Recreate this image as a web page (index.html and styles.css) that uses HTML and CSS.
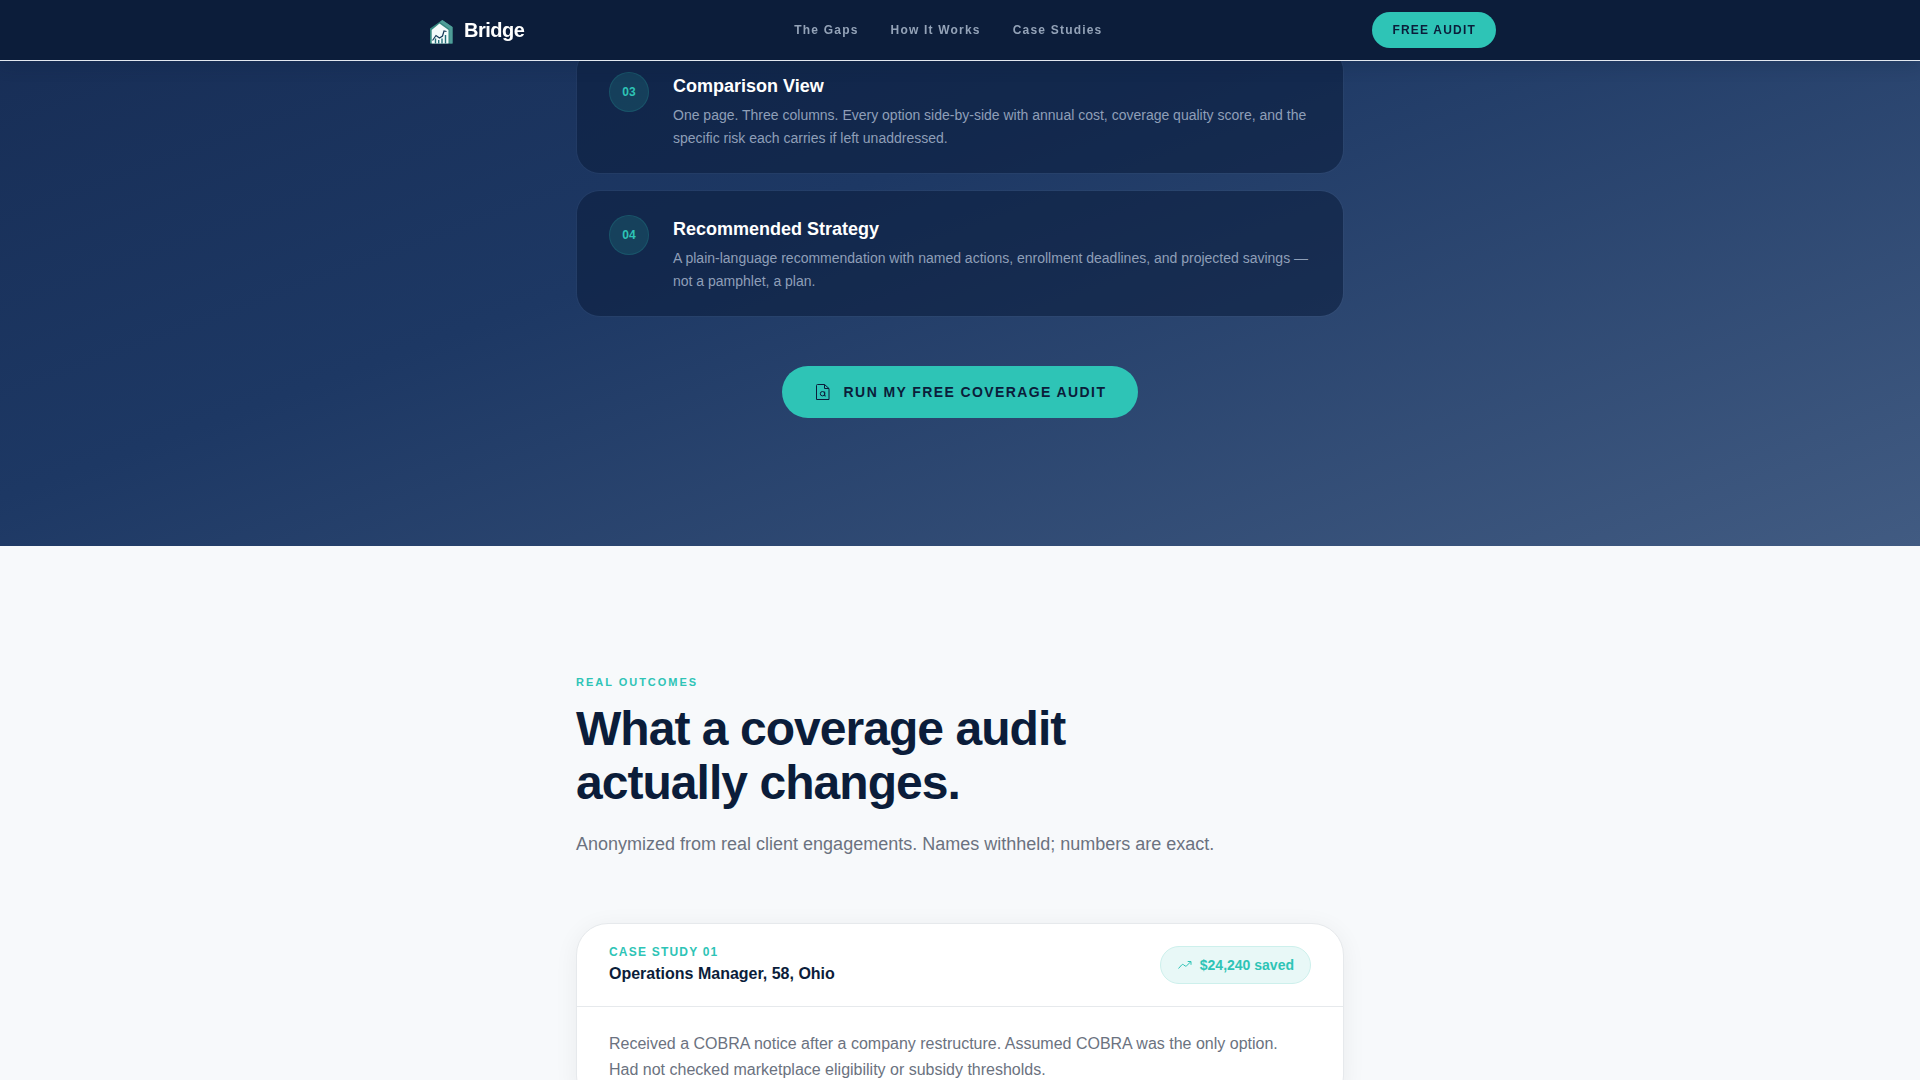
FILE: index.html
```html
<!DOCTYPE html>
<html lang="en">
<head>
  <meta charset="utf-8">
  <meta name="viewport" content="width=device-width, initial-scale=1">
  <title>Bridge</title>
  <link rel="stylesheet" href="styles.css">
</head>
<body>
  <header class="site-header">
    <div class="site-header-inner">
      <a class="brand" href="#">
        <svg class="brand-mark" viewBox="0 0 32 32" aria-hidden="true">
          <path d="M6 14.500 18.300 6l10.200 7v16.500H6z" fill="#35877f"/>
          <path d="M18.300 6l10.200 7v16.500h-3V15L16 8z" fill="#4f9d98"/>
          <path d="M7.700 16 15.500 9.500l9 6.500v13.500H7.700z" fill="#f4fbfb"/>
          <path d="M11.500 29.500v-5M14.700 29.500V26M18 29.500v-5M21.500 29.500V21" stroke="#24707a" stroke-width="1.400" fill="none"/>
          <path d="M8.500 26.500l3.500-5 3.500 2.500 3-2 1.500-5 2.500.5" stroke="#173b58" stroke-width="1.200" fill="none"/>
        </svg>
        <span>Bridge</span>
      </a>
      <nav class="site-nav" aria-label="Main">
        <a href="#gaps">The Gaps</a>
        <a href="#how">How It Works</a>
        <a href="#cases">Case Studies</a>
      </nav>
      <button class="button button-small" type="button">FREE AUDIT</button>
    </div>
  </header>

  <main>
    <section class="steps" id="how">
      <div class="container">
        <ol class="step-list">
          <li class="step">
            <span class="step-number">03</span>
            <div>
              <h3 class="step-title">Comparison View</h3>
              <p class="step-text">One page. Three columns. Every option side-by-side with annual cost, coverage quality score, and the specific risk each carries if left unaddressed.</p>
            </div>
          </li>
          <li class="step">
            <span class="step-number">04</span>
            <div>
              <h3 class="step-title">Recommended Strategy</h3>
              <p class="step-text">A plain-language recommendation with named actions, enrollment deadlines, and projected savings — not a pamphlet, a plan.</p>
            </div>
          </li>
        </ol>
        <div class="steps-action">
          <button class="button button-large" type="button">
            <svg class="button-icon" viewBox="0 0 18 18" aria-hidden="true">
              <path d="M10.500 1.500H3.500a1 1 0 0 0-1 1v14h12.500V5.500zM10.500 1.500v4H15"/>
              <circle cx="8.500" cy="10.700" r="2.200"/>
              <path d="M10.700 8.500v4.500h1"/>
            </svg>
            RUN MY FREE COVERAGE AUDIT
          </button>
        </div>
      </div>
    </section>

    <section class="outcomes" id="cases">
      <div class="container">
        <div class="section-head">
          <p class="eyebrow">REAL OUTCOMES</p>
          <h2 class="section-title">What a coverage audit<br>actually changes.</h2>
          <p class="section-lead">Anonymized from real client engagements. Names withheld; numbers are exact.</p>
        </div>
        <article class="case">
          <div class="case-head">
            <div>
              <p class="case-label">CASE STUDY 01</p>
              <h3 class="case-title">Operations Manager, 58, Ohio</h3>
            </div>
            <span class="saving">
              <svg class="saving-icon" viewBox="0 0 16 16" aria-hidden="true">
                <path d="M1.500 11.500 4.800 7.800Q5.600 7 6.500 7.700L8 8.900Q8.900 9.600 9.700 8.700L14 4.500M10.700 4.500H14V7.800"/>
              </svg>
              $24,240 saved
            </span>
          </div>
          <div class="case-body">
            <p class="case-text">Received a COBRA notice after a company restructure. Assumed COBRA was the only option. Had not checked marketplace eligibility or subsidy thresholds.</p>
          </div>
        </article>
      </div>
    </section>
  </main>
</body>
</html>
```
FILE: styles.css
```css
:root {
  --navy: #0b1d3a;
  --teal: #2ec4b6;
  --line: #e6e9ec;
}

* {
  box-sizing: border-box;
}

body {
  margin: 0;
  background: #f7f9fb;
  color: var(--navy);
  font-family: "Liberation Sans", Arial, sans-serif;
}

h2, h3, p, ol {
  margin: 0;
}

a {
  color: inherit;
  text-decoration: none;
}

.container {
  max-width: 816px;
  margin: 0 auto;
  padding: 0 24px;
}

/* Header */

.site-header {
  position: fixed;
  top: 0;
  left: 0;
  right: 0;
  z-index: 10;
  background: #0c1d3a;
  border-bottom: 1px solid #e2e8f0;
  box-shadow: 0 4px 16px rgba(11, 29, 48, 0.2);
}

.site-header-inner {
  display: flex;
  align-items: center;
  justify-content: space-between;
  max-width: 1120px;
  margin: 0 auto;
  padding: 12px 24px;
}

.brand {
  display: flex;
  align-items: center;
  gap: 8px;
  color: #fff;
  font-size: 20px;
  font-weight: 700;
  letter-spacing: -0.025em;
}

.brand-mark {
  width: 32px;
  height: 32px;
}

.site-nav {
  display: flex;
  gap: 32px;
  color: #94a3b8;
  font-size: 12px;
  font-weight: 700;
  letter-spacing: 0.1em;
}

.button {
  display: inline-flex;
  align-items: center;
  justify-content: center;
  border: 0;
  border-radius: 999px;
  background: var(--teal);
  color: var(--navy);
  font-family: inherit;
  font-weight: 700;
  letter-spacing: 0.1em;
  white-space: nowrap;
}

.button-small {
  padding: 10px 20px;
  font-size: 12px;
  line-height: 16px;
}

.button-large {
  gap: 12px;
  padding: 16px 32px;
  font-size: 14px;
  line-height: 20px;
}

.button-icon {
  width: 18px;
  height: 18px;
  fill: none;
  stroke: currentColor;
  stroke-width: 1;
}

/* Steps */

.steps {
  padding: 47px 0 128px;
  background: linear-gradient(160deg, #172d55 0%, #1d3864 40%, #415b82 100%);
}

.step-list {
  display: grid;
  gap: 16px;
  padding: 0;
  list-style: none;
}

.step {
  display: flex;
  align-items: flex-start;
  gap: 24px;
  padding: 24px 32px 23px;
  border: 1px solid rgba(255, 255, 255, 0.03);
  border-radius: 24px;
  background: rgba(12, 30, 62, 0.6);
  background-clip: padding-box;
}

.step-number {
  display: flex;
  flex: none;
  align-items: center;
  justify-content: center;
  width: 40px;
  height: 40px;
  border: 1px solid rgba(46, 196, 182, 0.15);
  border-radius: 50%;
  background: rgba(46, 196, 182, 0.16);
  color: var(--teal);
  font-size: 12px;
  font-weight: 700;
}

.step-title {
  margin-bottom: 4px;
  color: #fff;
  font-size: 18px;
  line-height: 28px;
}

.step-text {
  color: #8f9fb8;
  font-size: 14px;
  line-height: 23px;
}

.steps-action {
  display: flex;
  justify-content: center;
  margin-top: 49px;
}

/* Outcomes */

.outcomes {
  padding: 128px 0;
}

.section-head {
  margin-bottom: 64px;
}

.eyebrow {
  margin-bottom: 12px;
  color: var(--teal);
  font-size: 11px;
  font-weight: 700;
  line-height: 16px;
  letter-spacing: 0.18em;
}

.section-title {
  margin-bottom: 20px;
  font-size: 48px;
  line-height: 54px;
  letter-spacing: -0.02em;
}

.section-lead {
  color: #6b7280;
  font-size: 18px;
  line-height: 29px;
}

.case {
  border: 1px solid var(--line);
  border-radius: 32px;
  background: #fff;
  box-shadow: 0 4px 24px rgba(0, 0, 0, 0.06);
}

.case-head {
  display: flex;
  align-items: center;
  justify-content: space-between;
  gap: 24px;
  padding: 20px 32px;
  border-bottom: 1px solid var(--line);
}

.case-label {
  margin-bottom: 2px;
  color: var(--teal);
  font-size: 12px;
  font-weight: 700;
  line-height: 16px;
  letter-spacing: 0.1em;
}

.case-title {
  font-size: 16px;
  line-height: 24px;
}

.saving {
  display: flex;
  align-items: center;
  gap: 7px;
  padding: 8px 16px;
  border: 1px solid #cdf0ec;
  border-radius: 999px;
  background: #e8f8f7;
  color: var(--teal);
  font-size: 14px;
  font-weight: 700;
  line-height: 20px;
  white-space: nowrap;
}

.saving-icon {
  width: 16px;
  height: 16px;
  fill: none;
  stroke: currentColor;
  stroke-width: 1;
}

.case-body {
  padding: 24px 32px;
}

.case-text {
  color: #6b7280;
  font-size: 16px;
  line-height: 26px;
}
```
